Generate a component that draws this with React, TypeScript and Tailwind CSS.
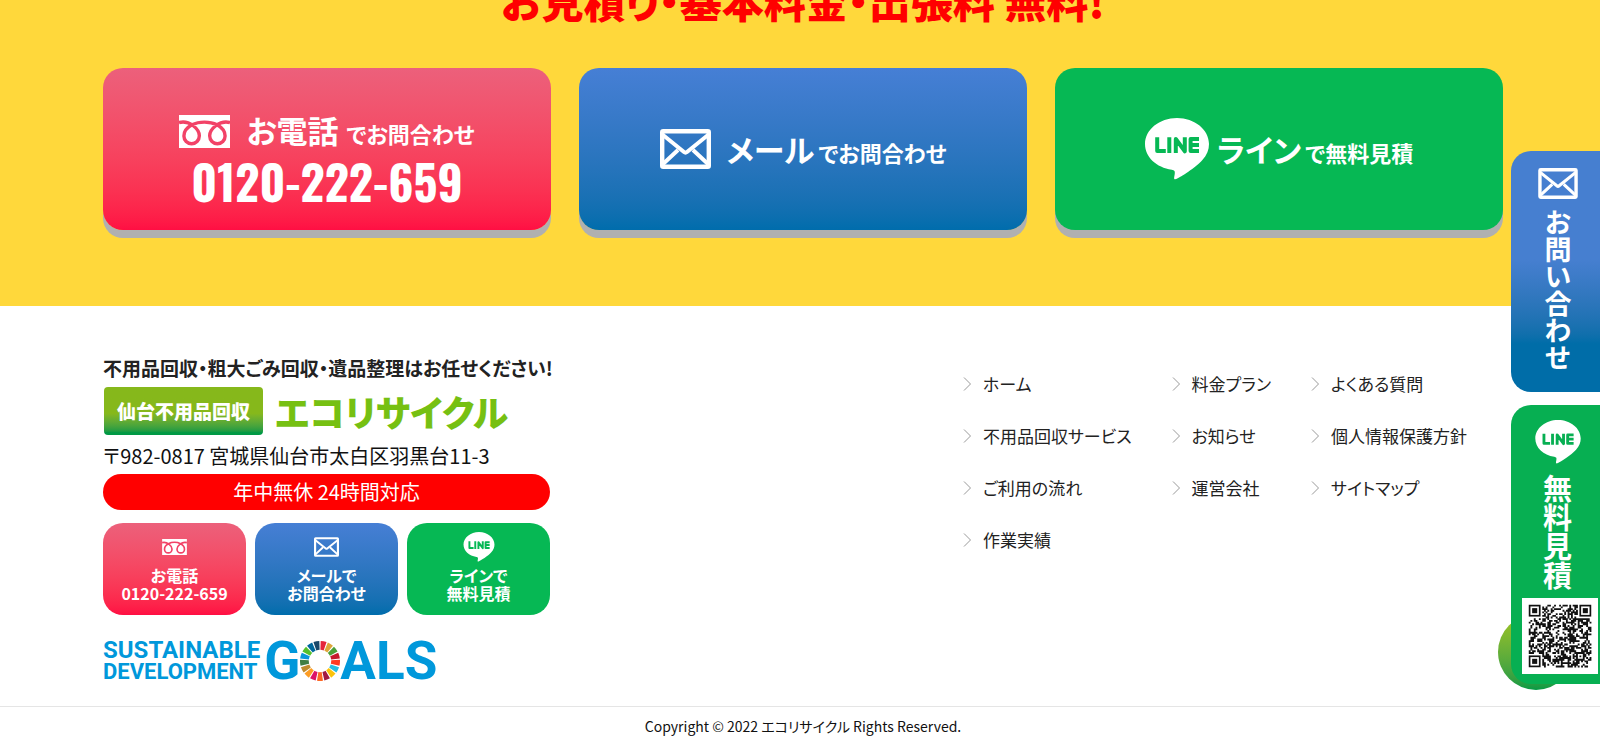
import React from "react";

const jp = "font-['Noto_Sans_CJK_JP',sans-serif] [font-feature-settings:'palt']";

function FreeCallIcon({ className }: { className: string }) {
  return (
    <svg viewBox="0 0 51 33" className={className} aria-hidden="true">
      <path fill="#fff" d="M0 0h51v33H0z" />
      <g fill="none" stroke="#f24267" strokeWidth="3.4">
        <path d="M0 7.500C5 6.200 10 7.500 14 10.500C18.500 14 20.500 17.500 20.300 21A7.700 7.700 0 0 1 4.900 21C4.900 16 8 12.500 13 9.800C20 6.200 31 6.200 38 9.800C43 12.500 46.100 16 46.100 21A7.700 7.700 0 0 1 30.700 21C30.500 17.500 32.500 14 37 10.500C41 7.500 46 6.200 51 7.500" />
      </g>
    </svg>
  );
}

function MailIcon({ className }: { className: string }) {
  return (
    <svg viewBox="0 0 51 40" className={className} aria-hidden="true" fill="none" stroke="#fff">
      <rect x="2.200" y="2.200" width="46.600" height="35.600" rx="1" strokeWidth="4.400" />
      <path strokeWidth="4" d="M3 6l21 17q1.500 1.200 3 0L48 6M3 35l15-14M48 35L33 21" />
    </svg>
  );
}

function LineIcon({ className, color }: { className: string; color: string }) {
  return (
    <svg viewBox="0 0 64 62" className={className} aria-hidden="true">
      <path
        fill="#fff"
        d="M32 0C14.400 0 0 11.600 0 26c0 12.900 11.400 23.600 26.800 25.700 1 .2 2.500.7 2.800 1.600.3.800.2 2.100.1 3l-.5 2.700c-.1.800-.6 3.200 2.800 1.700s18.600-10.900 25.400-18.700C62 36.900 64 31.700 64 26 64 11.600 49.600 0 32 0z"
      />
      <g fill="none" stroke={color} strokeWidth="4" strokeLinejoin="round">
        <path d="M12.200 19.300v13.700h8.600M24.300 19.300v15.700M30.800 35V21l9 12.300V19.300M54 21h-8.400v12H54M45.600 27H54" />
      </g>
    </svg>
  );
}

const goalColors = [
  "#e5243b", "#dda63a", "#4c9f38", "#c5192d", "#ff3a21", "#26bde2", "#fcc30b", "#a21942", "#fd6925",
  "#dd1367", "#fd9d24", "#bf8b2e", "#3f7e44", "#0a97d9", "#56c02b", "#00689d", "#19486a",
];

function GoalWheel() {
  const step = (Math.PI * 2) / 17;
  const point = (r: number, a: number) =>
    `${(20 + r * Math.sin(a)).toFixed(2)} ${(20 - r * Math.cos(a)).toFixed(2)}`;
  return (
    <svg viewBox="0 0 40 40" className="size-10" aria-hidden="true">
      {goalColors.map((color, i) => {
        const a = i * step + 0.035;
        const b = (i + 1) * step - 0.035;
        return (
          <path
            key={color}
            fill={color}
            d={`M${point(20, a)}A20 20 0 0 1 ${point(20, b)}L${point(11.2, b)}A11.200 11.200 0 0 0 ${point(11.2, a)}Z`}
          />
        );
      })}
    </svg>
  );
}

function QrCode() {
  const size = 37;
  const finders = [[0, 0], [size - 7, 0], [0, size - 7]];
  let seed = 982;
  let d = "";
  for (let y = 0; y < size; y++) {
    for (let x = 0; x < size; x++) {
      seed = (seed * 1103515 + 12345) % 2147483648;
      const reserved = finders.some(([fx, fy]) => x >= fx - 1 && x <= fx + 7 && y >= fy - 1 && y <= fy + 7);
      const align = Math.max(Math.abs(x - 30), Math.abs(y - 30));
      const on = align <= 2 ? align !== 1 : !reserved && (seed >> 16) % 2 === 0;
      if (on) d += `M${x} ${y}h1.100v1.100h-1.100z`;
    }
  }
  return (
    <svg viewBox="-4 -4 45 45" className="size-[76px] bg-white" role="img" aria-label="LINE QR">
      <path d={d} fill="#111" />
      {finders.map(([x, y]) => (
        <g key={`${x}-${y}`}>
          <rect x={x + 0.5} y={y + 0.5} width="6" height="6" fill="none" stroke="#111" />
          <rect x={x + 2} y={y + 2} width="3" height="3" fill="#111" />
        </g>
      ))}
    </svg>
  );
}

const menus = [
  ["ホーム", "不用品回収サービス", "ご利用の流れ", "作業実績"],
  ["料金プラン", "お知らせ", "運営会社"],
  ["よくある質問", "個人情報保護方針", "サイトマップ"],
];

const cardClass =
  "flex h-[162px] items-center justify-center rounded-[20px] font-bold text-white shadow-[0_8px_0_#b0b0b0]";
const smallClass =
  "flex h-[92px] flex-col items-center rounded-[20px] text-center text-base leading-[18px] font-bold text-white";
const red = "bg-linear-to-b from-[#ec607b] to-[#ff0e43]";
const blue = "bg-linear-to-b from-[#467fd5] to-[#006dac]";

function Contact() {
  return (
    <section className="overflow-hidden bg-[#ffd83b] pb-[76px] pl-[6px]">
      <h2 className="-mt-[30px] mb-[38px] text-center text-[42px] leading-[60px] font-black text-[#ff0000]">
        お見積り・基本料金・出張料 無料!
      </h2>
      <div className="mx-auto grid max-w-[1400px] grid-cols-3 gap-7">
        <a href="#tel" className={`${cardClass} ${red} flex-col pt-5`}>
          <span className="flex items-center">
            <FreeCallIcon className="mr-4 h-[33px] w-[51px]" />
            <span className="flex items-baseline gap-2 text-[31px] leading-10">
              お電話<span className="text-[22px]">でお問合わせ</span>
            </span>
          </span>
          <span className="font-['Oswald','Roboto_Condensed','Liberation_Sans_Narrow',sans-serif] text-[47px] leading-[56px]">
            0120-222-659
          </span>
        </a>
        <a href="#mail" className={`${cardClass} ${blue}`}>
          <MailIcon className="mr-4 h-[40px] w-[51px]" />
          <span className="flex items-baseline gap-1 text-[31px]">
            メール<span className="text-[22px]">でお問合わせ</span>
          </span>
        </a>
        <a href="#line" className={`${cardClass} bg-[#06b854]`}>
          <LineIcon className="mr-2 h-[62px] w-[64px]" color="#06b854" />
          <span className="flex items-baseline gap-1 text-[31px]">
            ライン<span className="text-[22px]">で無料見積</span>
          </span>
        </a>
      </div>
    </section>
  );
}

function Company() {
  return (
    <div className="w-[447px]">
      <p className="text-[19px] leading-[26px] font-bold whitespace-nowrap text-[#222]">
        不用品回収・粗大ごみ回収・遺品整理はお任せください!
      </p>
      <a href="#home" className="mt-1.5 flex h-12 items-center gap-3 pl-px whitespace-nowrap">
        <span className="flex h-12 w-[159px] items-center justify-center rounded bg-linear-to-b from-[#86b81b] from-55% to-[#009944] to-95% text-[19px] leading-6 font-black text-white">
          仙台不用品回収
        </span>
        <span className="text-[36px] leading-[44px] font-black text-[#76c012]">エコリサイクル</span>
      </a>
      <p className="mt-1.5 text-[20px] leading-[30px] text-[#111]">〒982-0817 宮城県仙台市太白区羽黒台11-3</p>
      <p className="mt-[3px] rounded-full bg-[#ff0000] text-center text-[20px] leading-9 text-white">
        年中無休 24時間対応
      </p>
      <div className="mt-[13px] grid grid-cols-3 gap-[9px]">
        <a href="#tel" className={`${smallClass} ${red}`}>
          <span className="flex h-[43px] items-center pt-1">
            <FreeCallIcon className="h-4 w-[25px]" />
          </span>
          <span>
            お電話
            <br />
            0120-222-659
          </span>
        </a>
        <a href="#mail" className={`${smallClass} ${blue}`}>
          <span className="flex h-[43px] items-center pt-1">
            <MailIcon className="h-5 w-[25px]" />
          </span>
          <span>
            メールで
            <br />
            お問合わせ
          </span>
        </a>
        <a href="#line" className={`${smallClass} bg-[#06b854]`}>
          <span className="flex h-[43px] items-center pt-1">
            <LineIcon className="h-[30px] w-8" color="#06b854" />
          </span>
          <span>
            ラインで
            <br />
            無料見積
          </span>
        </a>
      </div>
      <div className="mt-[26px] flex h-10 items-center font-['Roboto',sans-serif] font-bold text-[#0098db]">
        <span className="mr-1 flex flex-col leading-[22px]">
          <span className="text-[24px]">SUSTAINABLE</span>
          <span className="text-[22px]">DEVELOPMENT</span>
        </span>
        <span className="flex items-center text-[53px] leading-10">
          G<GoalWheel />
          ALS
        </span>
      </div>
    </div>
  );
}

function SideTabs() {
  return (
    <div className="fixed top-[151px] right-0 w-[89px] font-bold text-white">
      <span className="absolute top-[463px] -left-[13px] size-[76px] rounded-full bg-linear-to-b from-[#9fc41c] to-[#009a44]" />
      <a
        href="#mail"
        className="relative flex h-[241px] flex-col items-center gap-2.5 rounded-l-[20px] bg-linear-to-b from-[#467fd0] from-45% to-[#006da8] to-80% pt-[17px] pl-1"
      >
        <MailIcon className="h-[31px] w-10" />
        <span className="text-[27px] leading-[30px] [writing-mode:vertical-rl]">お問い合わせ</span>
      </a>
      <a
        href="#line"
        className="relative mt-[13px] flex h-[279px] flex-col items-center rounded-l-[20px] bg-[#07af52] pt-[15px] pl-1"
      >
        <LineIcon className="mb-2.5 h-[44px] w-[46px]" color="#07af52" />
        <span className="mb-2 text-[29px] leading-[30px] [writing-mode:vertical-rl]">無料見積</span>
        <span className="ml-1">
          <QrCode />
        </span>
      </a>
    </div>
  );
}

export default function App() {
  return (
    <div className={`bg-white ${jp}`} lang="ja">
      <Contact />
      <footer>
        <div className="pb-[25px] pl-[6px]">
          <div className="mx-auto flex max-w-[1400px] items-start justify-between pt-[49px]">
            <Company />
            <nav className="mt-4 mr-9 flex gap-10">
              {menus.map((items) => (
                <ul key={items[0]} className="flex flex-col gap-[26px] text-[17px] leading-[26px] text-[#222]">
                  {items.map((label) => (
                    <li key={label}>
                      <a href="#menu" className="flex items-center gap-[11px]">
                        <svg viewBox="0 0 9 14" className="h-3.5 w-[9px]" fill="none" stroke="#999" aria-hidden="true">
                          <path d="M1 .5L7.500 7 1 13.500" />
                        </svg>
                        {label}
                      </a>
                    </li>
                  ))}
                </ul>
              ))}
            </nav>
          </div>
        </div>
        <p className="border-t border-[#e5e5e5] pt-[9px] pb-2.5 pl-[6px] text-center text-[14px] leading-[21px] text-[#111]">
          Copyright © 2022 エコリサイクル Rights Reserved.
        </p>
      </footer>
      <SideTabs />
    </div>
  );
}
